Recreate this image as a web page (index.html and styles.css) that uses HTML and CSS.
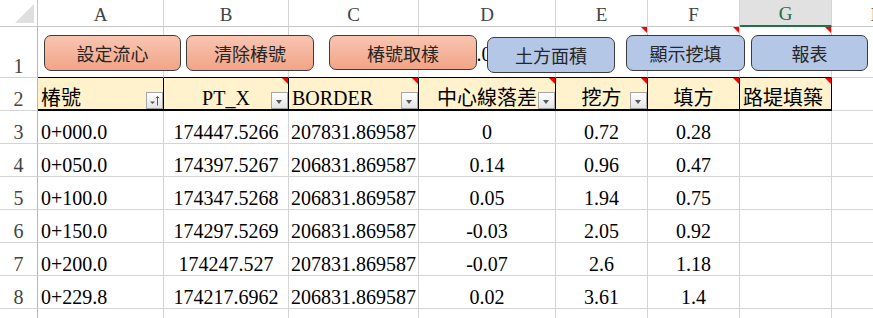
FILE: index.html
```html
<!DOCTYPE html>
<html lang="zh-Hant">
<head>
    <meta charset="UTF-8">
    <title>土方計算</title>
    <link rel="stylesheet" href="styles.css">
</head>
<body>
    <div class="sheet">
        <!-- column headers -->
        <div class="c corner"><span class="select-all"></span></div>
        <div class="c col-head">A</div>
        <div class="c col-head">B</div>
        <div class="c col-head">C</div>
        <div class="c col-head">D</div>
        <div class="c col-head">E</div>
        <div class="c col-head">F</div>
        <div class="c col-head selected">G</div>
        <div class="c col-head">H</div>

        <!-- row 1: buttons sit over these cells -->
        <div class="c row-head">1</div>
        <div class="c top"></div>
        <div class="c top"></div>
        <div class="c top"></div>
        <div class="c top hidden-val">10.05</div>
        <div class="c top"><span class="note"></span></div>
        <div class="c top"><span class="note"></span></div>
        <div class="c top"><span class="note"></span></div>
        <div class="c"></div>

        <!-- row 2: table header -->
        <div class="c row-head">2</div>
        <div class="c th">椿號<span class="filter sorted"><svg width="15" height="15" viewBox="0 0 15 15"><path d="M3 8.5h5l-2.5 2.5z" fill="#595959"/><path d="M10.5 12.5V3.5M8.8 5.2l1.7-1.7 1.7 1.7" stroke="#595959" fill="none"/></svg></span></div>
        <div class="c th mid">PT_X<span class="note"></span><span class="filter arrow"></span></div>
        <div class="c th">BORDER<span class="note"></span><span class="filter arrow"></span></div>
        <div class="c th mid">中心線落差<span class="note"></span><span class="filter arrow"></span></div>
        <div class="c th mid">挖方<span class="note"></span><span class="filter arrow"></span></div>
        <div class="c th mid">填方<span class="note"></span></div>
        <div class="c th">路堤填築<span class="note"></span></div>
        <div class="c"></div>

        <div class="c row-head">3</div>
        <div class="c">0+000.0</div>
        <div class="c mid">174447.5266</div>
        <div class="c mid">207831.869587</div>
        <div class="c mid">0</div>
        <div class="c mid">0.72</div>
        <div class="c mid">0.28</div>
        <div class="c"></div>
        <div class="c"></div>

        <div class="c row-head">4</div>
        <div class="c">0+050.0</div>
        <div class="c mid">174397.5267</div>
        <div class="c mid">206831.869587</div>
        <div class="c mid">0.14</div>
        <div class="c mid">0.96</div>
        <div class="c mid">0.47</div>
        <div class="c"></div>
        <div class="c"></div>

        <div class="c row-head">5</div>
        <div class="c">0+100.0</div>
        <div class="c mid">174347.5268</div>
        <div class="c mid">206831.869587</div>
        <div class="c mid">0.05</div>
        <div class="c mid">1.94</div>
        <div class="c mid">0.75</div>
        <div class="c"></div>
        <div class="c"></div>

        <div class="c row-head">6</div>
        <div class="c">0+150.0</div>
        <div class="c mid">174297.5269</div>
        <div class="c mid">206831.869587</div>
        <div class="c mid">-0.03</div>
        <div class="c mid">2.05</div>
        <div class="c mid">0.92</div>
        <div class="c"></div>
        <div class="c"></div>

        <div class="c row-head">7</div>
        <div class="c">0+200.0</div>
        <div class="c mid">174247.527</div>
        <div class="c mid">207831.869587</div>
        <div class="c mid">-0.07</div>
        <div class="c mid">2.6</div>
        <div class="c mid">1.18</div>
        <div class="c"></div>
        <div class="c"></div>

        <div class="c row-head">8</div>
        <div class="c">0+229.8</div>
        <div class="c mid">174217.6962</div>
        <div class="c mid">206831.869587</div>
        <div class="c mid">0.02</div>
        <div class="c mid">3.61</div>
        <div class="c mid">1.4</div>
        <div class="c"></div>
        <div class="c"></div>

        <div class="c row-head"></div>
        <div class="c"></div>
        <div class="c"></div>
        <div class="c"></div>
        <div class="c"></div>
        <div class="c"></div>
        <div class="c"></div>
        <div class="c"></div>
        <div class="c"></div>

        <!-- floating macro buttons -->
        <button class="shape salmon" id="btnFlow">設定流心</button>
        <button class="shape salmon" id="btnClear">清除椿號</button>
        <button class="shape salmon" id="btnSample">椿號取樣</button>
        <button class="shape blue" id="btnArea">土方面積</button>
        <button class="shape blue" id="btnShow">顯示挖填</button>
        <button class="shape blue" id="btnReport">報表</button>
    </div>
</body>
</html>
```

FILE: styles.css
```css
body {
    margin: 0;
    width: 873px;
    height: 318px;
    overflow: hidden;
    background: #fff;
    font-family: "Liberation Serif", "Noto Sans CJK TC", serif;
    font-size: 20px;
    color: #000;
}
.sheet {
    position: relative;
    display: grid;
    grid-template-columns: 38px 126px 125px 130px 137px 92px 92px 92px 92px;
    grid-template-rows: 27px 51px repeat(8, 33px);
}
.c {
    position: relative;
    box-sizing: border-box;
    display: flex;
    align-items: flex-end;
    padding: 0 3px;
    line-height: 22px;
    white-space: nowrap;
    border-right: 1px solid #d4d4d4;
    border-bottom: 1px solid #d4d4d4;
}
.mid {
    justify-content: center;
}
.corner {
    border-right-color: #c6c6c6;
    border-bottom-color: #c6c6c6;
}
.select-all {
    position: absolute;
    right: 3px;
    bottom: 3px;
    border-bottom: 19px solid #dfdfdf;
    border-left: 19px solid transparent;
}
.col-head {
    justify-content: center;
    font-size: 19px;
    color: #444;
    border-bottom-color: #c6c6c6;
}
.col-head.selected {
    background: #e1e1e1;
    color: #1e6b41;
    border-bottom: 2px solid #217346;
}
.row-head {
    justify-content: center;
    color: #444;
    border-right-color: #b8b8b8;
}
.top {
    border-bottom-color: #000;
}
.hidden-val {
    align-items: center;
    justify-content: center;
    padding: 3px 16px 0 0;
}
.th {
    background: #fff2cc;
    border-right-color: #000;
    border-bottom: 2px solid #000;
}
.note {
    position: absolute;
    top: 0;
    right: 0;
    border-top: 6px solid #ff0000;
    border-left: 6px solid transparent;
}
.filter {
    position: absolute;
    right: 0;
    bottom: 0;
    width: 17px;
    height: 17px;
    box-sizing: border-box;
    border: 1px solid #a6a6a6;
    background: linear-gradient(#ffffff, #e4e4e4);
    display: flex;
}
.filter.arrow::after {
    content: "";
    position: absolute;
    left: 4px;
    top: 7px;
    border-top: 4px solid #595959;
    border-left: 3.5px solid transparent;
    border-right: 3.5px solid transparent;
}
.shape {
    position: absolute;
    box-sizing: border-box;
    height: 36px;
    padding: 0;
    border: 1px solid #3c3c3c;
    border-radius: 7px;
    font-family: "Noto Sans CJK TC", sans-serif;
    font-size: 18px;
    line-height: 1;
    color: #262626;
    cursor: pointer;
}
.salmon {
    background: linear-gradient(#f8c5b0, #f2a487);
}
.blue {
    background: #b4c7e7;
}
#btnFlow   { left: 44px;  top: 35px; width: 137px; }
#btnClear  { left: 186px; top: 35px; width: 128px; }
#btnSample { left: 329px; top: 35px; width: 148px; height: 35px; }
#btnArea   { left: 487px; top: 37px; width: 128px; }
#btnShow   { left: 626px; top: 35px; width: 119px; }
#btnReport { left: 751px; top: 35px; width: 117px; }
```
